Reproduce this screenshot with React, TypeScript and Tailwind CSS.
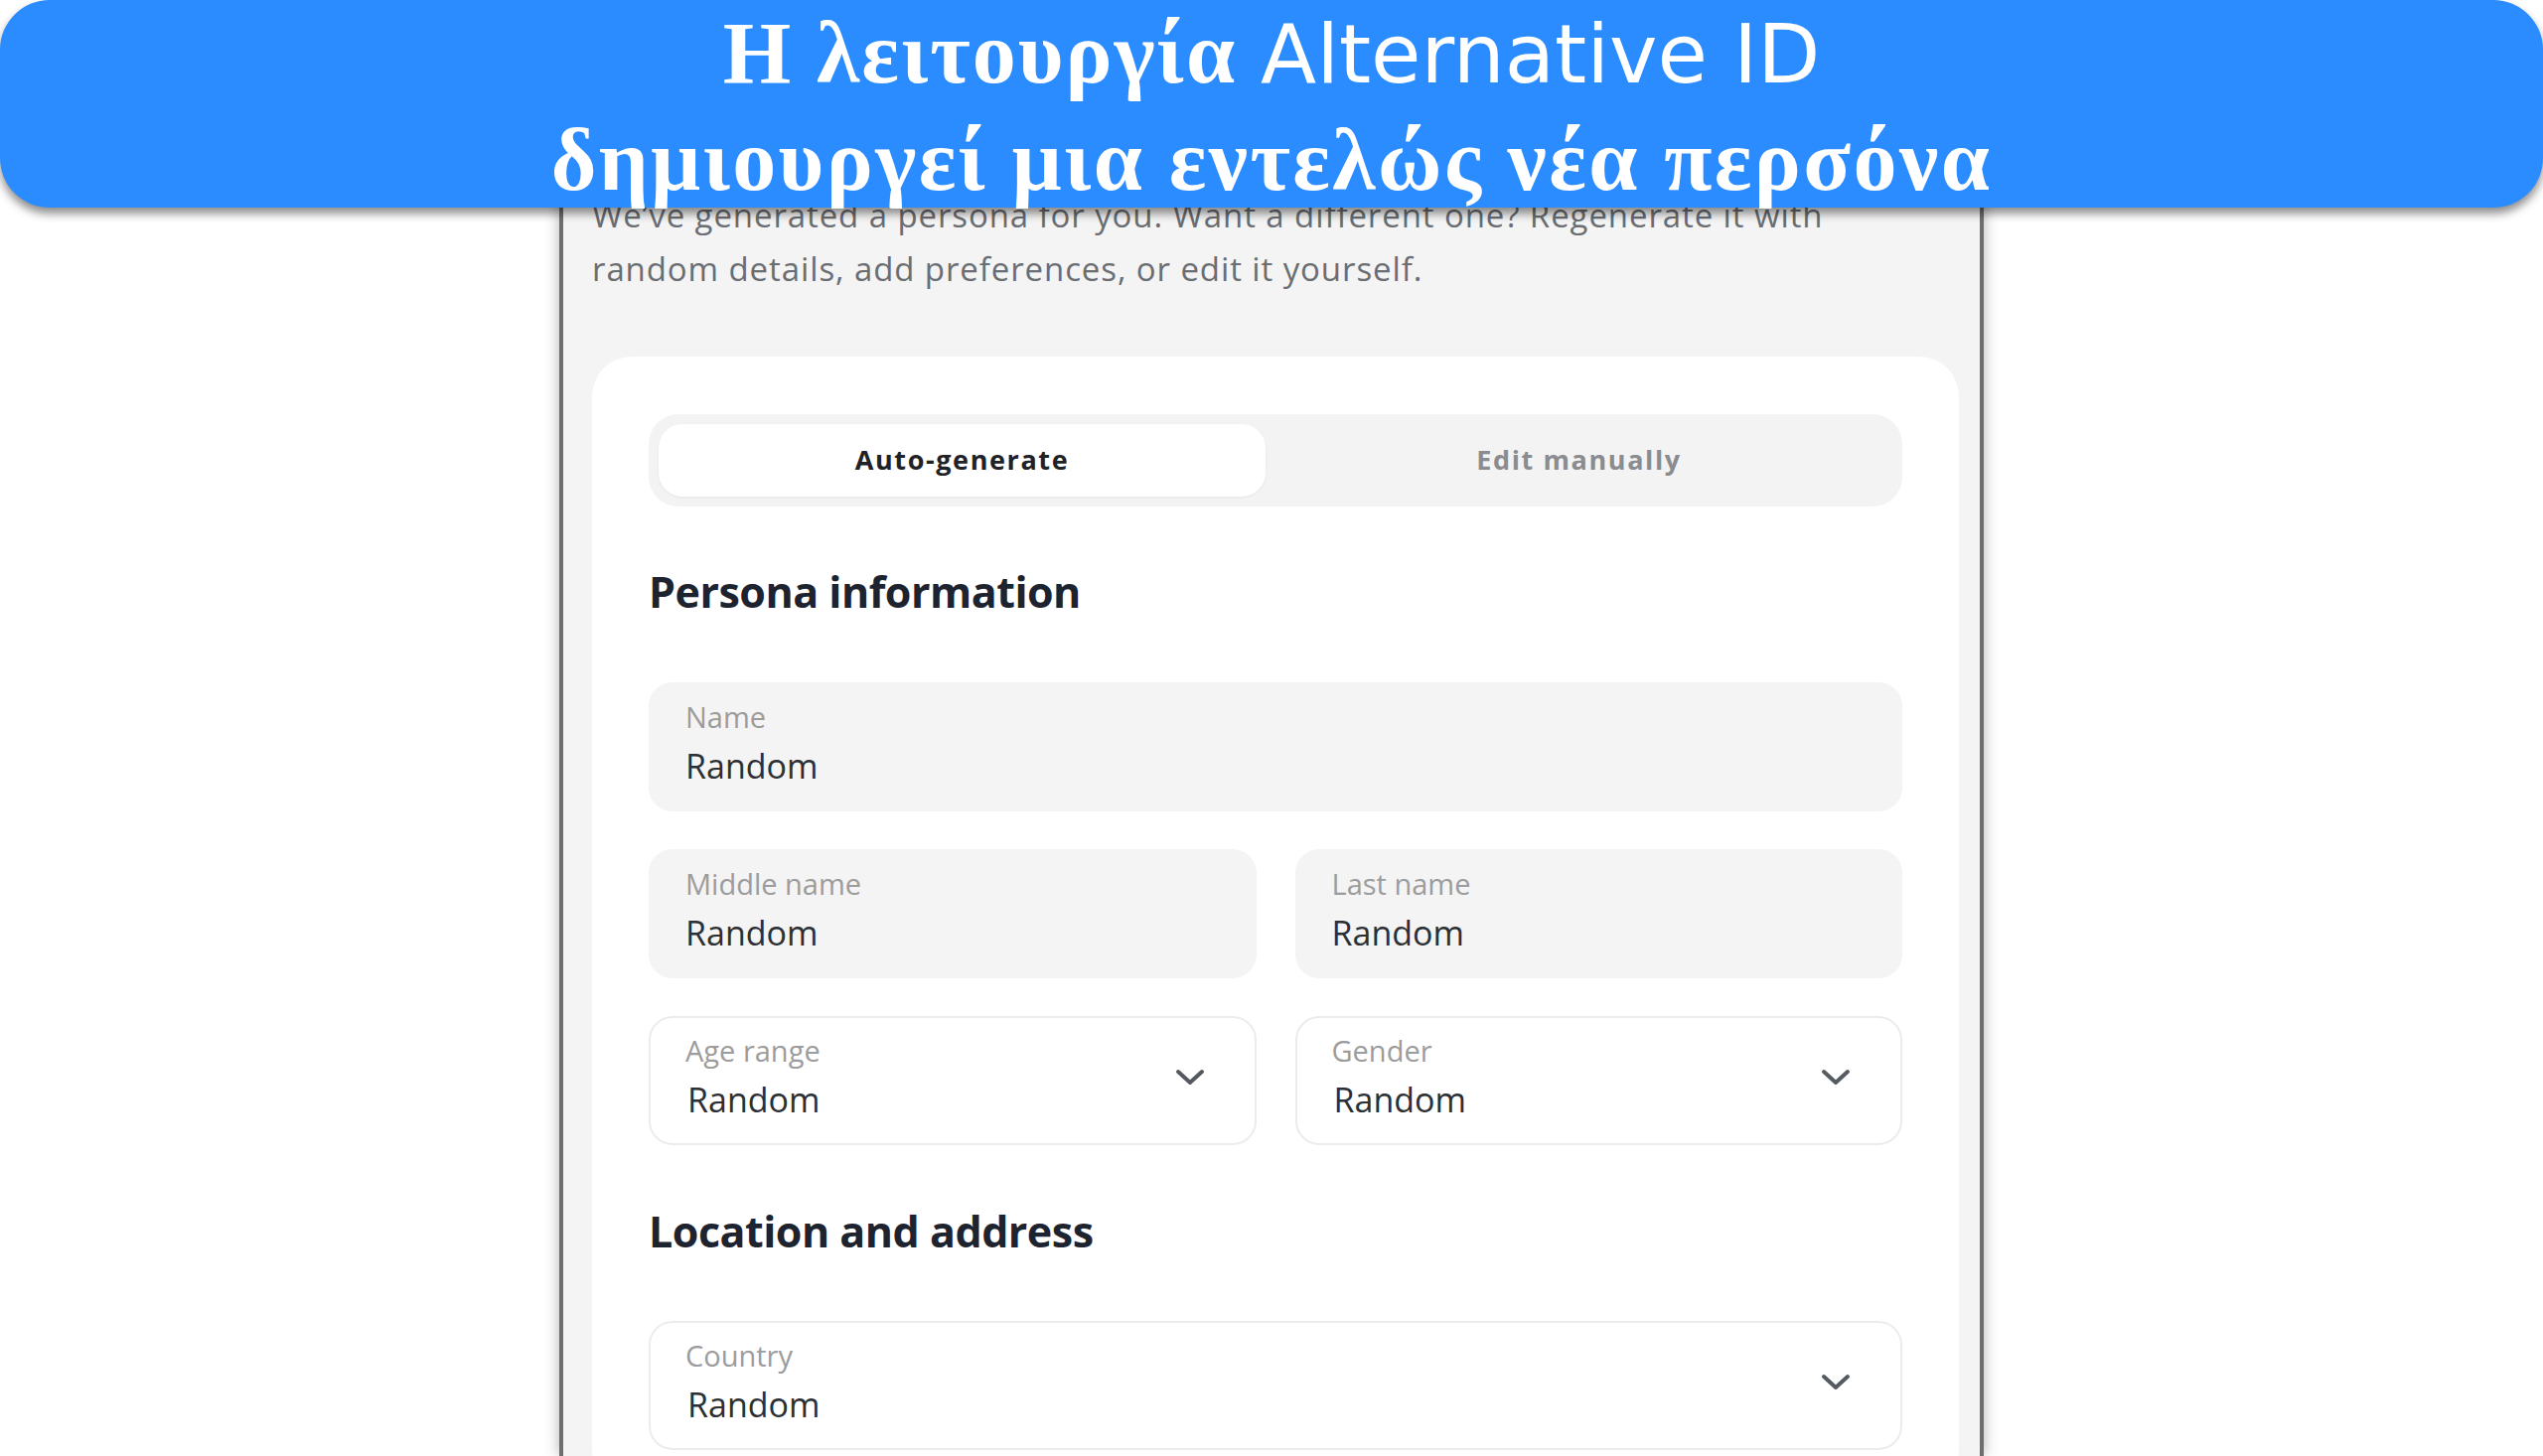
import React from "react";

function Chevron() {
  return (
    <svg width="30" height="20" viewBox="0 0 30 20" fill="none" className="shrink-0">
      <path d="M3 4 L15 15 L27 4" stroke="#555a60" strokeWidth="4" strokeLinecap="round" strokeLinejoin="round" />
    </svg>
  );
}

function TextField({ label, value }: { label: string; value: string }) {
  return (
    <div className="flex h-[130px] flex-col rounded-[24px] bg-[#f4f4f4] pl-[37px] pt-[18px]">
      <span className="text-[29px] leading-[34px] text-[#9c9c9c]">{label}</span>
      <span className="mt-[12px] text-[34px] leading-[40px] text-[#2c2f33]">{value}</span>
    </div>
  );
}

function SelectField({ label, value }: { label: string; value: string }) {
  return (
    <div className="flex h-[130px] items-center justify-between rounded-[24px] border-2 border-[#ececec] bg-white pl-[35px] pr-[50px]">
      <div className="flex flex-col self-start pt-[16px]">
        <span className="text-[29px] leading-[34px] text-[#9c9c9c]">{label}</span>
        <span className="mt-[12px] pl-[2px] text-[34px] leading-[40px] text-[#2c2f33]">{value}</span>
      </div>
      <div className="-mt-[6px]">
        <Chevron />
      </div>
    </div>
  );
}

export default function App() {
  return (
    <div className="relative h-[1466px] w-[2560px] overflow-hidden bg-white font-['Open_Sans',sans-serif]">
      {/* caption banner */}
      <div className="absolute left-0 top-0 z-10 flex h-[209px] w-full flex-col items-center rounded-[50px] bg-[#2b8cff] text-white shadow-[0_6px_10px_rgba(0,0,0,0.45)]">
        <div className="h-[108px] whitespace-nowrap font-['Liberation_Serif',serif] text-[88px] font-bold leading-[108px] tracking-[2px]">
          Η λειτουργία{" "}
          <span className="font-['DejaVu_Sans',sans-serif] text-[82px] font-normal tracking-normal">Alternative ID</span>
        </div>
        <div className="h-[108px] whitespace-nowrap font-['Liberation_Serif',serif] text-[88px] font-bold leading-[108px] tracking-[2.4px]">
          δημιουργεί μια εντελώς νέα περσόνα
        </div>
      </div>

      {/* phone panel */}
      <div className="mx-auto h-full w-[1434px] border-x-4 border-[#6e6e6e] bg-[#f4f4f4] pl-[29px] pr-[21px] pt-[190px] shadow-[0_0_14px_rgba(0,0,0,0.3)]">
        <p className="whitespace-nowrap text-[33px] leading-[54px] tracking-[0.9px] text-[#6a6d72]">
          We’ve generated a persona for you. Want a different one? Regenerate it with
          <br />
          random details, add preferences, or edit it yourself.
        </p>

        <div className="mt-[61px] rounded-[40px] bg-white px-[57px] pb-[40px] pt-[58px]">
          <div className="grid h-[93px] grid-cols-[611px_1fr] rounded-[30px] bg-[#f3f3f3] p-[10px]">
            <div className="flex items-center justify-center rounded-[24px] bg-white text-[27px] font-bold tracking-[1.6px] text-[#1f2328] shadow-[0_1px_3px_rgba(0,0,0,0.06)]">
              Auto-generate
            </div>
            <div className="flex items-center justify-center text-[27px] font-bold tracking-[1.6px] text-[#8a8c8f]">
              Edit manually
            </div>
          </div>

          <h2 className="mb-[63px] mt-[58px] text-[43px] font-bold leading-[56px] tracking-[-0.5px] text-[#1d2430]">
            Persona information
          </h2>

          <div className="flex flex-col gap-[38px]">
            <TextField label="Name" value="Random" />
            <div className="grid grid-cols-2 gap-[39px]">
              <TextField label="Middle name" value="Random" />
              <TextField label="Last name" value="Random" />
            </div>
            <div className="grid grid-cols-2 gap-[39px]">
              <SelectField label="Age range" value="Random" />
              <SelectField label="Gender" value="Random" />
            </div>
          </div>

          <h2 className="mb-[62px] mt-[59px] text-[43px] font-bold leading-[56px] tracking-[-0.5px] text-[#1d2430]">
            Location and address
          </h2>

          <SelectField label="Country" value="Random" />
        </div>
      </div>
    </div>
  );
}
